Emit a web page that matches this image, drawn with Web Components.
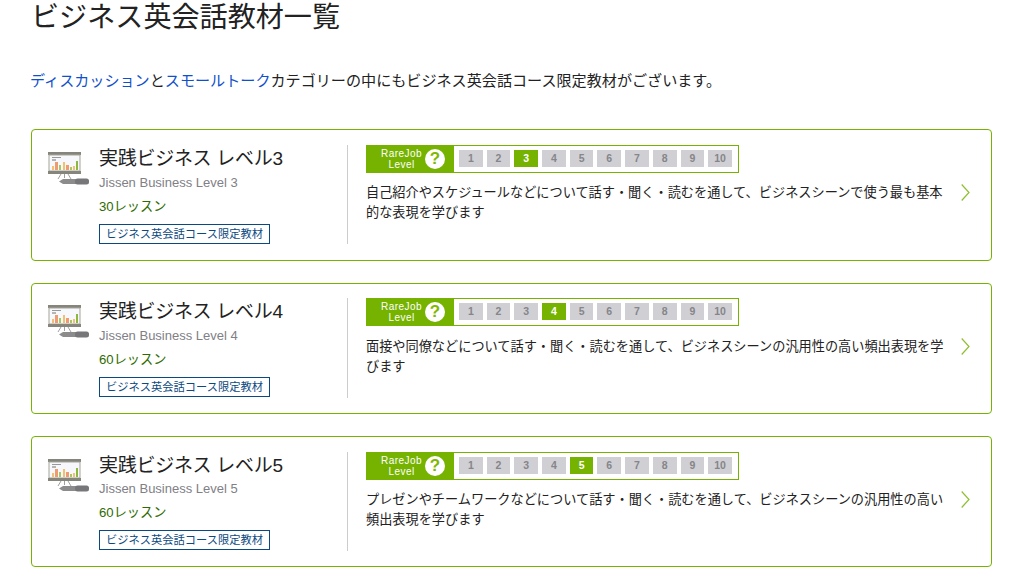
<!DOCTYPE html>
<html lang="ja">
<head>
<meta charset="utf-8">
<title>ビジネス英会話教材一覧</title>
<style>
  html, body { margin: 0; padding: 0; background: #fff; }
  body {
    font-family: "Liberation Sans", "Noto Sans CJK JP", sans-serif;
    color: #222;
    overflow: hidden;
    height: 577px;
  }
</style>
</head>
<body>
<course-page>
  <span slot="title">ビジネス英会話教材一覧</span>
  <span slot="intro"><a href="#">ディスカッション</a>と<a href="#">スモールトーク</a>カテゴリーの中にもビジネス英会話コース限定教材がございます。</span>
  <course-card level="3" lessons="30" title-ja="実践ビジネス レベル3" title-en="Jissen Business Level 3">自己紹介やスケジュールなどについて話す・聞く・読むを通して、ビジネスシーンで使う最も基本的な表現を学びます</course-card>
  <course-card level="4" lessons="60" title-ja="実践ビジネス レベル4" title-en="Jissen Business Level 4">面接や同僚などについて話す・聞く・読むを通して、ビジネスシーンの汎用性の高い頻出表現を学びます</course-card>
  <course-card level="5" lessons="60" title-ja="実践ビジネス レベル5" title-en="Jissen Business Level 5">プレゼンやチームワークなどについて話す・聞く・読むを通して、ビジネスシーンの汎用性の高い頻出表現を学びます</course-card>
</course-page>

<script>
class CoursePage extends HTMLElement {
  constructor() {
    super();
    this.attachShadow({ mode: 'open' });
  }

  connectedCallback() {
    this.shadowRoot.innerHTML = `
      <style>
        :host { display: block; padding: 0 20px 0 31px; }
        h1 {
          margin: 0;
          padding-top: 1px;
          height: 33px;
          line-height: 33px;
          font-size: 28.1px;
          font-weight: 400;
          color: #222;
        }
        p {
          margin: 35px 0 37.2px -1px;
          height: 23px;
          line-height: 23px;
          font-size: 15.1px;
          color: #222;
        }
        .cards { display: flex; flex-direction: column; gap: 22px; }
      </style>
      <h1><slot name="title"></slot></h1>
      <p><slot name="intro"></slot></p>
      <div class="cards"><slot></slot></div>
    `;
    // links live in the light DOM, so colour them from here
    this.querySelectorAll('a').forEach(a => {
      a.style.color = '#0f50cc';
      a.style.textDecoration = 'none';
    });
  }
}

class LevelBar extends HTMLElement {
  constructor() {
    super();
    this.attachShadow({ mode: 'open' });
  }

  connectedCallback() {
    const current = Number(this.getAttribute('current'));
    const cells = Array.from({ length: 10 }, (_, i) => i + 1)
      .map(n => `<span class="cell${n === current ? ' on' : ''}">${n}</span>`)
      .join('');
    this.shadowRoot.innerHTML = `
      <style>
        :host {
          display: flex;
          width: 373px;
          height: 28px;
          box-sizing: border-box;
          border: 1px solid #76b300;
          background: #fff;
        }
        .label {
          width: 87px;
          flex: none;
          background: #76b300;
          color: #fff;
          display: flex;
          align-items: center;
          box-sizing: border-box;
          padding-left: 14px;
          gap: 3px;
        }
        .label span {
          font-size: 10px;
          line-height: 11px;
          letter-spacing: 0.45px;
          text-align: center;
          width: 41px;
        }
        .q {
          flex: none;
          width: 20px;
          height: 20px;
          border-radius: 50%;
          background: #fff;
          color: #7fb800;
          font-size: 17px;
          font-weight: 700;
          line-height: 20px;
          text-align: center;
        }
        .cells { display: flex; gap: 4px; padding: 4px 0 0 5px; }
        .cell {
          width: 23.7px;
          height: 17px;
          line-height: 17px;
          background: #d0d0d4;
          color: #85858a;
          font-size: 10.5px;
          font-weight: 700;
          text-align: center;
        }
        .cell.on { background: #76b300; color: #fff; }
      </style>
      <div class="label"><span>RareJob<br>Level</span><div class="q">?</div></div>
      <div class="cells">${cells}</div>
    `;
  }
}

class CourseCard extends HTMLElement {
  constructor() {
    super();
    this.attachShadow({ mode: 'open' });
  }

  connectedCallback() {
    const level = this.getAttribute('level');
    this.shadowRoot.innerHTML = `
      <style>
        :host {
          display: flex;
          height: 131.4px;
          box-sizing: border-box;
          border: 1px solid #76b300;
          border-radius: 4px;
          padding: 14.7px 0 15.3px 16px;
          background: #fff;
        }
        .icon { width: 36px; flex: none; margin-top: 7px; }
        .icon svg { display: block; overflow: visible; }
        .info {
          width: 249px;
          flex: none;
          box-sizing: border-box;
          margin-left: 15px;
          padding-top: 1px;
          border-right: 1px solid #ccc;
        }
        .ja { font-size: 19px; line-height: 26px; color: #222; letter-spacing: -0.28px; }
        .en { font-size: 13px; line-height: 16px; margin-top: 2.7px; color: #808086; }
        .lessons { font-size: 13.2px; line-height: 18px; margin-top: 7px; color: #2f6b00; }
        .tag {
          display: inline-block;
          margin-top: 8px;
          border: 1px solid #0b4a80;
          font-size: 11.25px;
          line-height: 18px;
          padding: 0 6px;
          color: #0b4a80;
        }
        .main { width: 580px; flex: none; margin-left: 18px; }
        .desc {
          font-size: 13.18px;
          line-height: 20px;
          margin-top: 10.3px;
          color: #222;
        }
        .chev { flex: none; margin: 39.3px 0 0 15px; }
        .chev svg { display: block; }
      </style>
      <div class="icon">
        <svg width="42" height="33" viewBox="0 0 42 33">
          <rect x="0" y="0" width="33" height="3" fill="#85857c"/>
          <rect x="1" y="3" width="31" height="16" fill="#f6f8fb" stroke="#a5a59c"/>
          <rect x="0" y="19" width="33" height="3" fill="#85857c"/>
          <rect x="4" y="5" width="9" height="1" fill="#999"/>
          <rect x="4" y="7" width="4" height="2" fill="#b5b5b5"/>
          <rect x="4" y="14" width="2" height="4" fill="#f4c070"/>
          <rect x="7" y="10" width="3" height="8" fill="#ef9a70"/>
          <rect x="11" y="13" width="2" height="5" fill="#a8c860"/>
          <rect x="15" y="10" width="2" height="8" fill="#f4c070"/>
          <rect x="18" y="13" width="3" height="5" fill="#ef9a70"/>
          <rect x="22" y="15" width="2" height="3" fill="#a8c860"/>
          <rect x="25" y="14" width="2" height="4" fill="#f4c070"/>
          <rect x="28" y="9" width="2" height="9" fill="#8cb840"/>
          <path d="M13 22l-3 5M20 22l3 5M16.500 22v4" stroke="#a0a0a0" fill="none"/>
          <path d="M11 29.500l4-2.500h14v5H15z" fill="#8c8c8c"/>
          <rect x="27" y="26.500" width="14" height="6" rx="2.500" fill="#77777a"/>
        </svg>
      </div>
      <div class="info">
        <div class="ja">${this.getAttribute('title-ja')}</div>
        <div class="en">${this.getAttribute('title-en')}</div>
        <div class="lessons">${this.getAttribute('lessons')}レッスン</div>
        <div class="tag">ビジネス英会話コース限定教材</div>
      </div>
      <div class="main">
        <level-bar current="${level}"></level-bar>
        <div class="desc"><slot></slot></div>
      </div>
      <div class="chev">
        <svg width="9" height="17" viewBox="0 0 9 17">
          <path d="M.700 .500L8 8.500.700 16.500" fill="none" stroke="#8fbf30" stroke-width="1.200"/>
        </svg>
      </div>
    `;
  }
}

customElements.define('level-bar', LevelBar);
customElements.define('course-card', CourseCard);
customElements.define('course-page', CoursePage);
</script>
</body>
</html>
